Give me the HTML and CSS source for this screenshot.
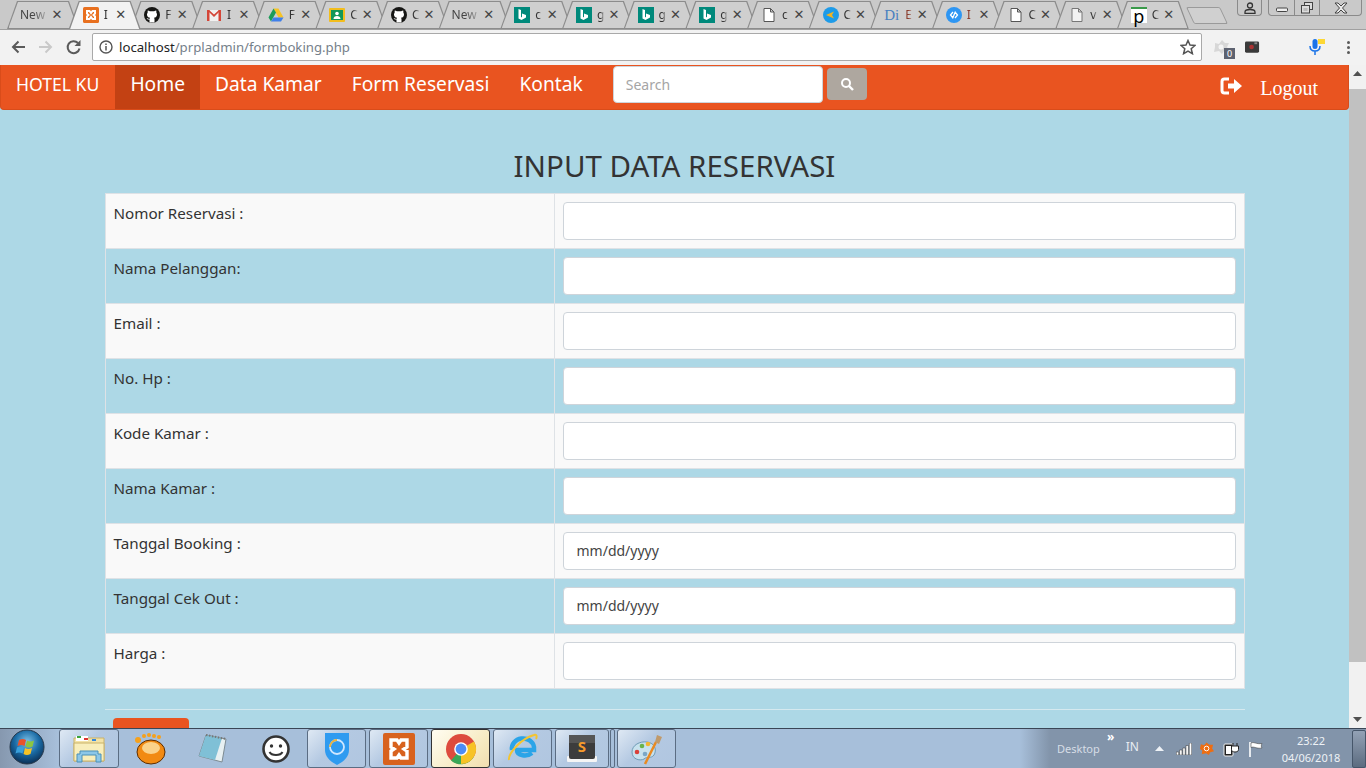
FILE: index.html
```html
<!DOCTYPE html>
<html lang="id">
<head>
<meta charset="utf-8">
<title>Input Data Reservasi</title>
<link rel="stylesheet" href="styles.css">
</head>
<body>
<div class="screen">
  <header class="browser">
    <div class="tabstrip">
      <div class="tabs">
        <div class="tab newtab"><span class="title wide">New</span><span class="x">&#10005;</span></div>
        <div class="tab active"><svg class="fav" viewBox="0 0 16 16"><rect width="16" height="16" rx="1.500" fill="#e8701f"/><path d="M4 4h2.500L8 6l1.500-2H12v2.500L10.500 8 12 9.500V12H9.500L8 10l-1.500 2H4V9.500L5.500 8 4 6.500z" fill="none" stroke="#fff" stroke-width="2"/></svg><span class="title">I</span><span class="x">&#10005;</span></div>
        <div class="tab"><svg class="fav" viewBox="0 0 16 16"><circle cx="8" cy="8" r="8" fill="#161614"/><path d="M5.500 15.500v-3c-2 .4-2.600-1-2.800-1.500 1 .2 1.500 1 2.800.900.100-.5.300-.9.600-1.100C4 10.500 3 9.400 3 7.400c0-.8.300-1.500.700-2-.1-.5-.1-1.200.1-1.900.8 0 1.500.4 2 .8.700-.2 3.700-.2 4.400 0 .5-.4 1.200-.8 2-.8.200.7.200 1.400.1 1.900.4.500.7 1.200.7 2 0 2-1 3.100-3.100 3.400.3.300.6.800.6 1.500v3.300z" fill="#fff"/></svg><span class="title">F</span><span class="x">&#10005;</span></div>
        <div class="tab"><svg class="fav" viewBox="0 0 16 16"><path d="M1 3h14v11H1z" fill="#f1f1f1"/><path d="M1 3h2.500v11H1zM12.500 3H15v11h-2.500z" fill="#d44638"/><path d="M1 3h2l5 4.500L13 3h2L8 10z" fill="#d44638"/></svg><span class="title">I</span><span class="x">&#10005;</span></div>
        <div class="tab"><svg class="fav" viewBox="0 0 16 16"><path d="M5.500 1.500h5l5 9h-5z" fill="#f7c325"/><path d="M5.500 1.500 .5 10.500l2.500 4 5-9z" fill="#1c9c58"/><path d="M3 14.500h10l2.500-4h-10z" fill="#3f7fe9"/></svg><span class="title">F</span><span class="x">&#10005;</span></div>
        <div class="tab"><svg class="fav" viewBox="0 0 16 16"><rect width="16" height="14" y="1" rx="1" fill="#f2bd1d"/><rect x="2" y="3" width="12" height="10" fill="#12975a"/><circle cx="8" cy="6.500" r="1.800" fill="#fff"/><path d="M4.500 12c0-2 1.500-3 3.500-3s3.500 1 3.500 3z" fill="#fff"/></svg><span class="title">C</span><span class="x">&#10005;</span></div>
        <div class="tab"><svg class="fav" viewBox="0 0 16 16"><circle cx="8" cy="8" r="8" fill="#161614"/><path d="M5.500 15.500v-3c-2 .4-2.600-1-2.800-1.500 1 .2 1.500 1 2.800.900.100-.5.300-.9.600-1.100C4 10.500 3 9.400 3 7.400c0-.8.300-1.500.700-2-.1-.5-.1-1.200.1-1.900.8 0 1.500.4 2 .8.700-.2 3.700-.2 4.400 0 .5-.4 1.200-.8 2-.8.200.7.200 1.400.1 1.900.4.500.7 1.200.7 2 0 2-1 3.100-3.100 3.400.3.300.6.800.6 1.500v3.300z" fill="#fff"/></svg><span class="title">C</span><span class="x">&#10005;</span></div>
        <div class="tab newtab"><span class="title wide">New</span><span class="x">&#10005;</span></div>
        <div class="tab"><svg class="fav" viewBox="0 0 16 16"><rect width="16" height="16" fill="#00897b"/><path d="M4.500 2v9.500L7.500 13l4.500-2.500V8L8 6.500V9.800L7 10.500V3z" fill="#fff"/></svg><span class="title">c</span><span class="x">&#10005;</span></div>
        <div class="tab"><svg class="fav" viewBox="0 0 16 16"><rect width="16" height="16" fill="#00897b"/><path d="M4.500 2v9.500L7.500 13l4.500-2.500V8L8 6.500V9.800L7 10.500V3z" fill="#fff"/></svg><span class="title">g</span><span class="x">&#10005;</span></div>
        <div class="tab"><svg class="fav" viewBox="0 0 16 16"><rect width="16" height="16" fill="#00897b"/><path d="M4.500 2v9.500L7.500 13l4.500-2.500V8L8 6.500V9.800L7 10.500V3z" fill="#fff"/></svg><span class="title">g</span><span class="x">&#10005;</span></div>
        <div class="tab"><svg class="fav" viewBox="0 0 16 16"><rect width="16" height="16" fill="#00897b"/><path d="M4.500 2v9.500L7.500 13l4.500-2.500V8L8 6.500V9.800L7 10.500V3z" fill="#fff"/></svg><span class="title">g</span><span class="x">&#10005;</span></div>
        <div class="tab"><svg class="fav" viewBox="0 0 16 16"><path d="M3 1.500h6.500l3.500 3.500v9.500H3zM9.500 1.500V5H13" fill="#fff" stroke="#555"/></svg><span class="title">c</span><span class="x">&#10005;</span></div>
        <div class="tab"><svg class="fav" viewBox="0 0 16 16"><circle cx="8" cy="8" r="8" fill="#1e9be8"/><path d="M3 8l8-3.500L9 8l2 3.500z" fill="#f0b323"/></svg><span class="title">C</span><span class="x">&#10005;</span></div>
        <div class="tab"><span class="fav ditext">Di</span><span class="title brown">E</span><span class="x">&#10005;</span></div>
        <div class="tab"><svg class="fav" viewBox="0 0 16 16"><circle cx="8" cy="8" r="8" fill="#2e96f3"/><path d="M7 5 4.500 8 7 11M9 5l2.500 3L9 11M9.500 4.500 6.500 11.500" fill="none" stroke="#fff" stroke-width="1.300"/></svg><span class="title brown">I</span><span class="x">&#10005;</span></div>
        <div class="tab"><svg class="fav" viewBox="0 0 16 16"><path d="M3 1.500h6.500l3.500 3.500v9.500H3zM9.500 1.500V5H13" fill="#fff" stroke="#555"/></svg><span class="title">C</span><span class="x">&#10005;</span></div>
        <div class="tab"><svg class="fav" viewBox="0 0 16 16"><path d="M3 1.500h6.500l3.500 3.500v9.500H3zM9.500 1.500V5H13" fill="#f2f2f2" stroke="#777"/></svg><span class="title">v</span><span class="x">&#10005;</span></div>
        <div class="tab"><span class="fav ptext">p</span><span class="title">C</span><span class="x">&#10005;</span></div>
      </div>
      <div class="addtab"></div>
      <div class="winctl">
        <div class="winbtn profile"><svg viewBox="0 0 14 12" width="14" height="12"><circle cx="7" cy="3.500" r="2.500" fill="none" stroke="#333" stroke-width="1.300"/><path d="M2 11.500V10c0-1.500 2-2.500 5-2.500s5 1 5 2.500v1.500z" fill="none" stroke="#333" stroke-width="1.300"/></svg></div>
        <div class="wingroup">
          <div class="winbtn"><svg viewBox="0 0 14 12" width="14" height="12"><rect x="1.500" y="6" width="11" height="3.500" rx="1" fill="#eee" stroke="#444"/></svg></div>
          <div class="winbtn"><svg viewBox="0 0 14 12" width="14" height="12"><rect x="4.500" y=".5" width="8" height="7" fill="#ddd" stroke="#444"/><rect x="1.500" y="3.500" width="8" height="7.500" fill="#ddd" stroke="#444"/><rect x="3.500" y="6" width="4" height="3" fill="#bbb"/></svg></div>
          <div class="winbtn close"><svg viewBox="0 0 16 12" width="16" height="12"><path d="M2 1h3l3 3 3-3h3l-4.500 5 4.500 5h-3L8 8l-3 3H2l4.500-5z" fill="#e8e8e8" stroke="#444"/></svg></div>
        </div>
      </div>
    </div>
    <div class="toolbar">
      <svg class="nav-ic first" viewBox="0 0 16 16"><path d="M15 8H3M8.500 2.500 3 8l5.500 5.500" fill="none" stroke="#5a5a5a" stroke-width="2"/></svg>
      <svg class="nav-ic" viewBox="0 0 16 16"><path d="M1 8h12M7.500 2.500 13 8l-5.500 5.500" fill="none" stroke="#c9c9c9" stroke-width="2"/></svg>
      <svg class="nav-ic" viewBox="0 0 16 16"><path d="M13.500 9.500A6 6 0 1 1 12 4" fill="none" stroke="#5a5a5a" stroke-width="2"/><path d="M14.500 1v6h-6z" fill="#5a5a5a"/></svg>
      <div class="omnibox">
        <svg class="info" viewBox="0 0 14 14"><circle cx="7" cy="7" r="6" fill="none" stroke="#555" stroke-width="1.400"/><path d="M7 6v4.500M7 3.500v1.400" stroke="#555" stroke-width="1.500"/></svg>
        <span class="url"><span class="host">localhost</span>/prpladmin/formboking.php</span>
        <svg class="star" viewBox="0 0 16 16"><path d="M8 1.500l2 4.600 5 .4-3.800 3.300 1.200 4.900L8 12.100l-4.400 2.600 1.200-4.900L1 6.500l5-.4z" fill="none" stroke="#555" stroke-width="1.500"/></svg>
      </div>
      <div class="ext avast-ext">
        <svg viewBox="0 0 18 16" width="18" height="16"><path d="M3 4l4 1 3-4 3 3 4 0-2 4 2 3-5 1-2 3-3-3-5 1 1-5z" fill="#d7d7d7"/><circle cx="9" cy="8" r="2.500" fill="#f4f4f4"/></svg>
        <span class="badge">0</span>
      </div>
      <div class="ext cam-ext"><svg viewBox="0 0 16 14" width="15" height="14"><rect y="1" width="15" height="12" rx="1.500" fill="#3a3a3a"/><circle cx="7" cy="7" r="2.500" fill="#a33"/><rect x="10" y="2" width="3" height="2" fill="#888"/></svg></div>
      <div class="ext mic-ext"><svg viewBox="0 0 18 16" width="18" height="16"><rect x="3.500" y="0" width="5" height="10" rx="2.500" fill="#1a73e8"/><path d="M1 7c0 3.500 2 5 5 5s5-1.500 5-5M6 12v4" fill="none" stroke="#1a73e8" stroke-width="1.500"/><rect x="9" y="0" width="7" height="5" fill="#fdd835"/></svg></div>
      <div class="menu-dots"><i></i><i></i><i></i></div>
    </div>
  </header>

  <div class="viewport">
    <main class="page">
      <nav class="navbar">
        <a class="brand">HOTEL KU</a>
        <a class="navlink current">Home</a>
        <a class="navlink">Data Kamar</a>
        <a class="navlink">Form Reservasi</a>
        <a class="navlink">Kontak</a>
        <form class="search">
          <input class="search-input" placeholder="Search">
          <button class="search-btn" type="button" aria-label="Search"><svg viewBox="0 0 14 14" width="14" height="14"><circle cx="6" cy="6" r="4" fill="none" stroke="#fff" stroke-width="2"/><path d="M9 9l4 4" stroke="#fff" stroke-width="2.400"/></svg></button>
        </form>
        <a class="logout">
          <svg viewBox="0 0 22 18" width="22" height="18"><path d="M9 2H4.500A2.500 2.500 0 0 0 2 4.500v9A2.500 2.500 0 0 0 4.500 16H9" fill="none" stroke="#fff" stroke-width="3"/><path d="M8 6.500h6V2l8 7-8 7v-4.500H8z" fill="#fff"/></svg>
          <span>Logout</span>
        </a>
      </nav>
      <section class="container">
        <h2 class="heading">INPUT DATA RESERVASI</h2>
        <table class="form-table">
          <tbody>
            <tr><td class="lbl">Nomor Reservasi :</td><td class="fld"><input class="ctl"></td></tr>
            <tr><td class="lbl">Nama Pelanggan:</td><td class="fld"><input class="ctl"></td></tr>
            <tr><td class="lbl">Email :</td><td class="fld"><input class="ctl"></td></tr>
            <tr><td class="lbl">No. Hp :</td><td class="fld"><input class="ctl"></td></tr>
            <tr><td class="lbl">Kode Kamar :</td><td class="fld"><input class="ctl"></td></tr>
            <tr><td class="lbl">Nama Kamar :</td><td class="fld"><input class="ctl"></td></tr>
            <tr><td class="lbl">Tanggal Booking :</td><td class="fld"><input class="ctl" value="mm/dd/yyyy"></td></tr>
            <tr><td class="lbl">Tanggal Cek Out :</td><td class="fld"><input class="ctl" value="mm/dd/yyyy"></td></tr>
            <tr><td class="lbl">Harga :</td><td class="fld"><input class="ctl"></td></tr>
          </tbody>
        </table>
        <hr class="rule">
        <button class="submit" type="button" aria-label="Simpan"></button>
      </section>
    </main>
    <aside class="scrollbar">
      <div class="sb-arrow"><svg viewBox="0 0 9 5" width="9" height="5"><path d="M0 5l4.500-5L9 5z" fill="#505050"/></svg></div>
      <div class="sb-track"><div class="sb-thumb"></div></div>
      <div class="sb-arrow"><svg viewBox="0 0 9 5" width="9" height="5"><path d="M0 0l4.500 5L9 0z" fill="#505050"/></svg></div>
    </aside>
  </div>

  <footer class="taskbar">
    <div class="start">
      <svg viewBox="0 0 36 36" width="36" height="36"><defs><radialGradient id="orb" cx="50%" cy="35%" r="65%"><stop offset="0" stop-color="#7ec2e8"/><stop offset=".55" stop-color="#1a6ba5"/><stop offset="1" stop-color="#0b2f55"/></radialGradient></defs><circle cx="18" cy="18" r="17" fill="url(#orb)" stroke="#27384a"/><path d="M10 11c3-1.500 5-1 7 0l-1.500 6c-2-1-4-1.500-7 0z" fill="#e8532b"/><path d="M18 11.500c2 1 4 1.500 7 0l-1.500 6c-3 1.500-5 1-7 0z" fill="#8cc63f"/><path d="M8 18.500c3-1.500 5-1 7 0l-1.500 6c-2-1-4-1.500-7 0z" fill="#3aa0dc"/><path d="M16 19c2 1 4 1.500 7 0l-1.500 6c-3 1.500-5 1-7 0z" fill="#f7c325"/></svg>
    </div>
    <div class="tb-btn tb-first">
      <svg viewBox="0 0 34 30" width="34" height="30"><path d="M2 4h30v23H2z" fill="#f3e3a6" stroke="#c9b26a"/><path d="M4 2h12v5H4z" fill="#fff"/><rect x="5" y="2" width="4" height="2" fill="#3ba53b"/><rect x="12" y="4" width="4" height="2" fill="#d33"/><rect x="20" y="5" width="4" height="2" fill="#38d"/><path d="M2 9h30v18H2z" fill="#f8eebb" stroke="#c9b26a"/><path d="M5 28v-8h3v-3h18v3h3v8h-5v-7H10v7z" fill="#8cc7e8" stroke="#4a90b8"/></svg>
    </div>
    <div class="tb-plain">
      <svg viewBox="0 0 34 34" width="34" height="34"><ellipse cx="18" cy="20" rx="14" ry="12" fill="#f28a12" stroke="#5c2d00"/><ellipse cx="18" cy="16" rx="9" ry="6" fill="#fbd28a"/><circle cx="5" cy="8" r="3" fill="#f6a11b"/><circle cx="11" cy="4" r="2" fill="#f6a11b"/><circle cx="16" cy="3" r="2" fill="#f6a11b"/><circle cx="21" cy="4" r="2" fill="#f6a11b"/><circle cx="26" cy="5" r="2" fill="#f6a11b"/></svg>
    </div>
    <div class="tb-plain">
      <svg viewBox="0 0 34 34" width="34" height="34"><path d="M10 3 30 7 26 30 3 24z" fill="#e7f0f2" stroke="#7d8b92"/><path d="M10 3 26 6 19 28 3 24z" fill="#7fc0d6"/><path d="M10 3 30 7" stroke="#777" stroke-width="2" stroke-dasharray="1.500 1.500"/></svg>
    </div>
    <div class="tb-plain">
      <svg viewBox="0 0 32 32" width="32" height="32"><circle cx="16" cy="16" r="12.500" fill="#fff" stroke="#333" stroke-width="2.600"/><circle cx="11.500" cy="13" r="1.700" fill="#333"/><circle cx="20.500" cy="13" r="1.700" fill="#333"/><path d="M9.500 19c2 4 11 4 13 0" fill="none" stroke="#333" stroke-width="2"/></svg>
    </div>
    <div class="tb-btn">
      <svg viewBox="0 0 26 34" width="26" height="34"><path d="M1 1h24v17c0 7-6 12-12 15C7 30 1 25 1 18z" fill="#2f9bf0"/><circle cx="13" cy="15" r="7" fill="none" stroke="#cfe7ff" stroke-width="1.800"/><path d="M6 15a7 7 0 0 1 7-7" fill="none" stroke="#e8b23c" stroke-width="1.800"/></svg>
    </div>
    <div class="tb-btn">
      <svg viewBox="0 0 32 32" width="32" height="32"><rect width="32" height="32" rx="2" fill="#d8621e"/><path d="M8 7h6l2 3 2-3h6v7l-3 2 3 2v7h-6l-2-3-2 3H8v-7l3-2-3-2z" fill="none" stroke="#fff" stroke-width="3.400"/></svg>
    </div>
    <div class="tb-btn lit">
      <svg viewBox="0 0 32 32" width="32" height="32"><circle cx="16" cy="16" r="15" fill="#dd4b3e"/><path d="M16 16 29 23.500A15 15 0 0 1 6 27.500z" fill="#3aa757"/><path d="M16 16 29 8.500A15 15 0 0 1 16 31z" fill="#f7c325"/><circle cx="16" cy="16" r="6.800" fill="#fff"/><circle cx="16" cy="16" r="5.400" fill="#4d8cf5"/></svg>
    </div>
    <div class="tb-btn">
      <svg viewBox="0 0 34 34" width="34" height="34"><path d="M6 18a11 10 0 0 1 22-3v3H11c0 6 10 7 15 3" fill="none" stroke="#2aa4e8" stroke-width="4.500"/><path d="M3 28C2 22 14 7 28 3c3-1 3 2 2 4" fill="none" stroke="#f4c430" stroke-width="2"/></svg>
    </div>
    <div class="tb-btn narrow">
      <svg viewBox="0 0 32 30" width="32" height="30"><rect x="1" y="22" width="30" height="6" rx="1" fill="#f5f5f5"/><rect x="3" y="1" width="26" height="24" rx="2" fill="#3c3c3c"/><rect x="3" y="1" width="26" height="8" fill="#555"/><text class="s-glyph" x="16" y="18" text-anchor="middle">S</text></svg>
    </div>
    <div class="tb-sep"></div>
    <div class="tb-btn">
      <svg viewBox="0 0 34 34" width="34" height="34"><path d="M2 20c0-7 8-11 15-10 8 1 10 8 7 13-3 4-7 1-10 4-3 2-12 1-12-7z" fill="#c8e2ee" stroke="#6f9bb5"/><circle cx="7" cy="20" r="2.300" fill="#d9413a"/><circle cx="12" cy="14" r="2.300" fill="#69b34c"/><circle cx="18" cy="12" r="2.300" fill="#f2b632"/><circle cx="15" cy="22" r="2.300" fill="#7aa7c7"/><path d="M15 32 26 10" stroke="#e98a22" stroke-width="2.500"/><path d="M25 10l2-7 5 2-3 7z" fill="#c09a6b"/></svg>
    </div>
    <div class="tray">
      <span class="tray-desktop">Desktop</span>
      <span class="tray-more">&raquo;</span>
      <span class="tray-lang">IN</span>
      <svg class="tray-up" viewBox="0 0 9 5" width="9" height="5"><path d="M0 5l4.500-5L9 5z" fill="#eef2f6"/></svg>
      <svg class="tray-signal" viewBox="0 0 16 12" width="16" height="12"><path d="M.3 9h2.400v3H.3zM3.600 7H6v5H3.600zM6.800 5h2.400v7H6.800zM10 2.500h2.400V12H10zM13.300 0h2.400v12h-2.400z" fill="#fff" stroke="#333" stroke-width=".5"/></svg>
      <svg viewBox="0 0 16 15" width="15" height="15"><path d="M2 3l3.500 1L8 1l3 2.500 4 0-1 4 2 3-4 1-1.500 3-3-2-4.500 1 .5-4L1 8z" fill="#ee6d11"/><circle cx="8" cy="7.500" r="2.500" fill="none" stroke="#fff"/></svg>
      <svg viewBox="0 0 16 16" width="16" height="16"><rect x="1" y="3" width="9" height="12" rx="1" fill="#222" stroke="#eee"/><rect x="3" y="5" width="5" height="8" fill="#fff"/><path d="M10 2v3M14 2v3M8.500 5h7v3.500c0 2-2 2.500-3.500 2.500S8.500 10.500 8.500 8.500z" fill="#fff" stroke="#222"/></svg>
      <svg viewBox="0 0 16 16" width="16" height="16"><path d="M2 1v15" stroke="#fff" stroke-width="1.600"/><path d="M3 2c3-1.500 5 1.500 11 .5-1 2-1 3 0 4.500-6 1-8-2-11-.5z" fill="#fff" stroke="#333" stroke-width=".5"/></svg>
      <div class="clock"><span>23:22</span><span>04/06/2018</span></div>
      <div class="show-desktop"></div>
    </div>
  </footer>
</div>
</body>
</html>
```
FILE: styles.css
```css
* { box-sizing: border-box; }
html, body { margin: 0; padding: 0; height: 100%; overflow: hidden; }
body { font-family: "Noto Sans", "Open Sans", sans-serif; background: #add8e6; }
.screen { width: 1366px; height: 768px; display: flex; flex-direction: column; overflow: hidden; }

/* browser chrome */
.browser { flex: 0 0 65px; display: flex; flex-direction: column; }
.tabstrip { flex: 0 0 29px; background: #c9c9c9; display: flex; padding: 1px 0 0 7px; border-bottom: 1px solid #a0a0a0; position: relative; }
.tabs { display: flex; height: 28px; }
.tab {
  flex: 0 0 72px; width: 72px; height: 28px; margin-right: -10.35px; position: relative;
  clip-path: polygon(0 100%, 10px 0, 62px 0, 72px 100%);
  background: #8c8c8c; display: flex; align-items: center; padding: 0 0 0 14px;
}
.tab::before {
  content: ""; position: absolute; inset: 1px 1.5px 1px 1.5px; background: #cfcfcf;
  clip-path: polygon(0 100%, 9.500px 0, 59.500px 0, 69px 100%);
}
.tab > * { position: relative; z-index: 1; }
.tab.active { z-index: 2; }
.tab.active::before { background: #f2f2f2; bottom: 0; }
.fav { flex: 0 0 16px; width: 16px; height: 16px; display: block; }
.title {
  flex: 0 0 8px; width: 8px; margin: 0 3px 0 5px; overflow: hidden; font-size: 12px; line-height: 16px; color: #333; white-space: nowrap;
  -webkit-mask-image: linear-gradient(90deg, #000 40%, transparent);
  mask-image: linear-gradient(90deg, #000 40%, transparent);
}
.title.wide { flex: 0 0 31px; width: 31px; margin: 0 0 0 -1px; color: #444; }
.title.brown { color: #8a3b2b; }
.x { flex: 0 0 12px; font-size: 13px; line-height: 12px; color: #444; font-family: "DejaVu Sans", sans-serif; text-align: center; }
.ditext { font-family: "Liberation Serif", serif; font-size: 15px; line-height: 16px; color: #4a7fc0; }
.ptext { font-size: 18px; line-height: 14px; color: #000; background: #fff; text-align: center; border-top: 2px solid #3a9a4a; }
.addtab { width: 34px; height: 17px; margin: 6px 0 0 12px; background: #d0d0d0; border: 1px solid #9a9a9a; border-radius: 2px; transform: skewX(25deg); }
.winctl { margin: -1px 0 0 auto; padding-right: 4px; display: flex; gap: 6px; height: 17px; align-items: flex-start; }
.winbtn { height: 16px; display: flex; align-items: center; justify-content: center; width: 25px; }
.winbtn.profile { width: 25px; border: 1px solid #8a8a8a; border-top: 0; border-radius: 0 0 4px 4px; }
.wingroup { display: flex; height: 16px; border: 1px solid #8a8a8a; border-top: 0; border-radius: 0 0 4px 4px; }
.wingroup .winbtn + .winbtn { border-left: 1px solid #8a8a8a; }
.winbtn.close { width: 42px; }

.toolbar { flex: 1; background: #f2f2f2; display: flex; align-items: center; padding: 0 0 1px 0; position: relative; }
.nav-ic { flex: 0 0 16px; width: 16px; height: 16px; margin-left: 12px; }
.nav-ic.first { margin-left: 10px; }
.omnibox { width: 1110px; height: 28px; margin-left: 10px; background: #fff; border: 1px solid #a9a9a9; border-radius: 2px; display: flex; align-items: center; padding: 0 5px 0 6px; }
.info { flex: 0 0 14px; width: 14px; height: 14px; }
.url { margin-left: 6px; font-size: 13.200px; color: #75808a; white-space: nowrap; }
.host { color: #222; }
.star { margin-left: auto; width: 16px; height: 16px; }
.ext { position: relative; display: flex; align-items: center; }
.avast-ext { margin-left: 10px; width: 22px; height: 24px; }
.badge { position: absolute; right: -1px; bottom: 0; width: 11px; height: 11px; background: #5d6270; color: #fff; font-size: 9px; line-height: 11px; text-align: center; }
.cam-ext { margin-left: 11px; }
.mic-ext { margin-left: 49px; }
.menu-dots { margin-left: 20px; display: flex; flex-direction: column; gap: 2px; }
.menu-dots i { width: 3px; height: 3px; background: #5a5a5a; border-radius: 50%; display: block; }

/* page */
.viewport { flex: 1; min-height: 0; display: flex; background: #add8e6; }
.page { flex: 1; min-width: 0; overflow: hidden; }
.navbar { height: 45px; background: #e95420; border: 1px solid #d94c1a; border-top: 0; border-radius: 0 0 4px 4px; display: flex; align-items: stretch; padding-left: 15px; }
.brand { color: #fff; font-size: 17.600px; line-height: 38px; margin-right: 16px; }
.navlink { color: #fff; font-size: 19.200px; line-height: 38px; padding: 0 15px; }
.navlink.current { background: #c34113; }
.search { display: flex; align-items: flex-start; gap: 4px; margin-left: 15px; padding-top: 1px; }
.search-input { width: 210px; height: 37px; border: 1px solid #ced4da; border-radius: 4px; padding: 0 12px; font: 14px "Noto Sans", sans-serif; background: #fff; }
.search-input::placeholder { color: #a5a5a5; }
.search-btn { width: 40px; height: 32px; margin-top: 2px; border: 0; border-radius: 4px; background: #aea79f; display: flex; align-items: center; justify-content: center; padding: 0; }
.logout { margin-left: auto; padding-right: 30px; display: flex; align-items: center; gap: 18px; color: #fff; font: 20px "Liberation Serif", serif; }
.logout svg { margin-top: -3px; }
.logout span { margin-top: 3px; }

.container { width: 1140px; margin: 0 auto; }
.heading { margin: 0; padding-top: 36px; height: 83px; font-size: 29.500px; line-height: 40px; font-weight: 400; color: #333; text-align: center; }
.form-table { width: 100%; border-collapse: collapse; table-layout: fixed; }
.form-table td { border: 1px solid #dee2e6; height: 55px; }
.form-table tr:nth-child(odd) { background: #f9f9f9; }
.lbl { width: 449px; padding: 7px 8px 8px; vertical-align: top; font-size: 15.200px; line-height: 24px; color: #333; }
.fld { padding: 8px; vertical-align: top; }
.ctl { display: block; width: 100%; height: 38px; border: 1px solid #ced4da; border-radius: 4px; background: #fff; padding: 0 13px 2px; font: 14px "Noto Sans", sans-serif; color: #444; }
.rule { margin: 20px 0 8px; border: 0; border-top: 1px solid #d5e9ef; }
.submit { display: block; width: 76px; height: 38px; margin-left: 8px; border: 0; border-radius: 4px; background: #e95420; }

.scrollbar { flex: 0 0 17px; background: #f1f1f1; display: flex; flex-direction: column; }
.sb-arrow { flex: 0 0 17px; display: flex; align-items: center; justify-content: center; }
.sb-track { flex: 1; padding-top: 7px; padding-bottom: 49px; display: flex; }
.sb-thumb { flex: 1; background: #c1c1c1; }

/* taskbar */
.taskbar {
  flex: 0 0 40px; height: 40px; display: flex; align-items: center; padding-left: 59px; position: relative;
  border-top: 1px solid #3a4656; overflow: hidden;
  background: linear-gradient(90deg, #8698af 0, #a7bfda 58px, #a7bfda 1020px, #8294aa 1050px, #8294aa 100%);
}
.start { position: absolute; left: 9px; top: 0; }
.tb-btn, .tb-plain { height: 39px; display: flex; align-items: center; justify-content: center; }
.tb-btn { flex: 0 0 59.500px; width: 59.500px; margin-right: 2.500px; border: 1px solid #5b6d83; border-radius: 3px; background: linear-gradient(135deg, #dfe9f4, #b4c9e2 45%, #b0c6e0); }
.tb-btn.tb-first { margin-right: .500px; }
.tb-btn.lit { background: linear-gradient(135deg, #fffdf2, #f6e9bf 70%, #f0ddb0); border-color: #333; }
.tb-btn.narrow { flex: 0 0 54px; width: 54px; margin-right: 1px; }
.tb-plain { flex: 0 0 62.660px; width: 62.660px; }
.tb-sep { flex: 0 0 5px; height: 39px; border: 1px solid #5b6d83; border-radius: 2px; margin-right: 2px; }
.s-glyph { font: 700 15px "Noto Sans", sans-serif; fill: #f69a2c; }
.tray { margin-left: auto; display: flex; align-items: center; height: 100%; color: #e8edf3; gap: 9px; position: relative; }
.tray-desktop { font-size: 11px; color: #d6dde6; margin-right: 17px; }
.tray-more { position: absolute; left: 50px; top: 2px; font-size: 12px; line-height: 12px; color: #fff; font-weight: 700; }
.tray-lang { font-size: 12px; margin: -4px 7px 0 0; color: #e8edf3; }
.tray-up { margin-right: 3px; }
.tray-signal { margin-right: -2px; }
.clock { display: flex; flex-direction: column; align-items: center; font-size: 11px; line-height: 17px; color: #eef2f6; margin-left: 9px; width: 58px; }
.show-desktop { width: 14px; height: 38px; margin-left: 3px; border: 1px solid #46566a; border-radius: 2px; background: linear-gradient(#93a2b6, #5c6c80); }
```
